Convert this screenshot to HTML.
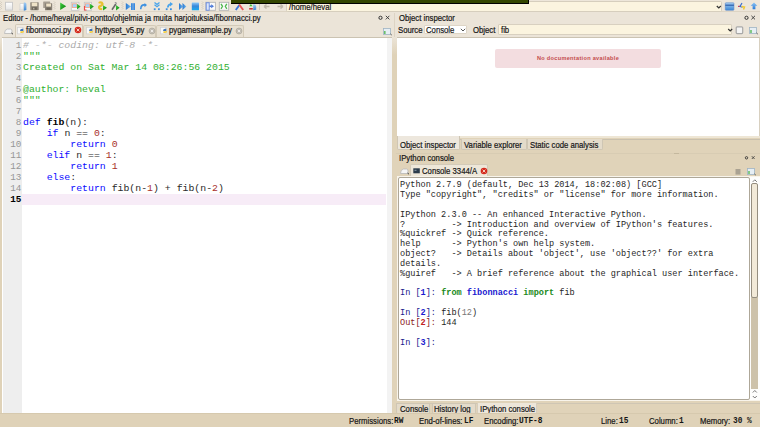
<!DOCTYPE html>
<html><head><meta charset="utf-8">
<style>
*{margin:0;padding:0;box-sizing:border-box}
html,body{width:760px;height:427px;overflow:hidden}
body{position:relative;background:#ebe4d8;font-family:"Liberation Sans",sans-serif;font-size:9px;color:#1a1a1a}
.a{position:absolute}
.t{position:absolute;white-space:pre;line-height:10px;font-size:9px;transform:scaleX(.86);transform-origin:0 0;color:#151515;-webkit-text-stroke:0.2px #151515}
.b{position:absolute;white-space:pre;line-height:10px;margin-top:0.6px;font-family:"Liberation Mono",monospace;font-weight:bold;font-size:9px;color:#151515;transform:scaleX(.87);transform-origin:0 0}
.code{position:absolute;left:23px;top:40px;font-family:"Liberation Mono",monospace;font-size:9.85px;line-height:11px;white-space:pre;color:#2a2a2a}
.gut{position:absolute;left:2px;width:19.3px;top:40px;font-family:"Liberation Mono",monospace;font-size:9.3px;line-height:11px;white-space:pre;color:#969696;text-align:right}
.kw{color:#0a0aff}
.num{color:#a8302a}
.str{color:#30b030}
.com{color:#ababab;font-style:italic}
.con{position:absolute;left:400px;top:181.2px;font-family:"Liberation Mono",monospace;font-size:8.57px;line-height:9.85px;white-space:pre;color:#262626}
.tab{position:absolute;border:1px solid #d3cab8;border-bottom:none;border-radius:2px 2px 0 0;background:#e8e0d1}
.btab{position:absolute;border:1px solid #cfc6b4;border-top:none;border-radius:0 0 2px 2px;background:#e4dbca}
</style></head><body>

<!-- toolbar -->
<div class="a" style="left:0;top:0;width:760px;height:12px;background:#ede6da"></div>
<div class="a" style="left:0;top:11px;width:760px;height:1px;background:#ddd4c4"></div>
<div class="a" style="left:286.3px;top:1px;width:435.7px;height:10.5px;background:#fbf4df;border:1px solid #d6cebd;border-radius:1.5px"></div>
<div class="t" style="left:289px;top:1.5px;color:#111">/home/heval</div>
<svg class="a" style="left:715px;top:4.5px" width="8" height="5"><path d="M1.8 1 L3.8 3 L5.8 1" fill="none" stroke="#333" stroke-width="1.2"/></svg>
<div class="a" style="left:231px;top:0;width:298px;height:3.6px;background:#344600;border-right:1px solid #000;border-bottom:1px solid #000"></div>
<svg class="a" style="left:0;top:0" width="760" height="13" viewBox="0 0 760 13">
<defs>
<linearGradient id="gb" x1="0" y1="0" x2="0" y2="1"><stop offset="0" stop-color="#8cc4f4"/><stop offset="1" stop-color="#2a7ad8"/></linearGradient>
<linearGradient id="gb2" x1="0" y1="0" x2="1" y2="0"><stop offset="0" stop-color="#2a78d0"/><stop offset="1" stop-color="#70b8f0"/></linearGradient>
<linearGradient id="gst" x1="0" y1="0" x2="0" y2="1"><stop offset="0" stop-color="#8cc8f8"/><stop offset="0.45" stop-color="#3a88d8"/><stop offset="1" stop-color="#18aaf0"/></linearGradient>
<linearGradient id="gg" x1="0" y1="0" x2="1" y2="1"><stop offset="0" stop-color="#40d040"/><stop offset="1" stop-color="#087a08"/></linearGradient>
<linearGradient id="gw" x1="0" y1="0" x2="0" y2="1"><stop offset="0" stop-color="#ffffff"/><stop offset="1" stop-color="#e4e4e4"/></linearGradient>
<linearGradient id="gof" x1="0" y1="0" x2="0" y2="1"><stop offset="0" stop-color="#a8d0f4"/><stop offset="1" stop-color="#3a86d4"/></linearGradient>
</defs>
<!-- grips (zigzag) -->
<g fill="none" stroke="#c9c1b2" stroke-width="0.8">
<path d="M0.5 1.5 l1 1 l-1 1 l1 1 l-1 1 l1 1 l-1 1 l1 1 l-1 1"/>
<path d="M54 1.5 l1 1 l-1 1 l1 1 l-1 1 l1 1 l-1 1 l1 1 l-1 1"/>
<path d="M122 1.5 l1 1 l-1 1 l1 1 l-1 1 l1 1 l-1 1 l1 1 l-1 1"/>
<path d="M202 1.5 l1 1 l-1 1 l1 1 l-1 1 l1 1 l-1 1 l1 1 l-1 1"/>
<path d="M259 4 l1 1 l-1 1 l1 1 l-1 1 l1 1 l-1 1"/>
</g>
<!-- new -->
<rect x="5.5" y="2.3" width="7" height="7.8" fill="url(#gw)" stroke="#c6c6c6" stroke-width="0.9"/>
<!-- open -->
<path d="M20 3.5 h4 v6.5 h-4.5 l0.5 -1 z" fill="url(#gw)" stroke="#d0d0d0" stroke-width="0.7"/>
<path d="M23.8 2.2 q2.6 0 2.6 1.5 v6.3 l-2.6 0.8 z" fill="url(#gof)"/>
<!-- save -->
<rect x="30.3" y="2.2" width="8.4" height="8" rx="0.6" fill="#8a8276"/>
<rect x="31.7" y="2.6" width="5.6" height="3.6" fill="#efe3c8"/>
<rect x="32.2" y="7.2" width="4.6" height="2.6" fill="#6a6458"/>
<rect x="33.2" y="7.8" width="1.2" height="1.6" fill="#c8c0b0"/>
<!-- save all -->
<rect x="43.2" y="1.5" width="7" height="6.5" rx="0.5" fill="#a59d90"/>
<rect x="45" y="3.2" width="7.2" height="7" rx="0.5" fill="#8a8276"/>
<rect x="46.2" y="3.6" width="4.8" height="3" fill="#efe3c8"/>
<rect x="46.5" y="7.6" width="4.2" height="2.2" fill="#6a6458"/>
<!-- run -->
<path d="M60.2 2.5 L66.2 6.3 L60.2 10 Z" fill="url(#gg)"/>
<!-- run config -->
<rect x="71.3" y="2.3" width="7.6" height="8" fill="#fafafa" stroke="#c4c4c4" stroke-width="0.8"/>
<rect x="72.3" y="3.8" width="4.6" height="3.6" fill="#a8d4fa" stroke="#f0a080" stroke-width="0.8"/>
<path d="M77 3.8 L80.5 6.6 L77 9.4 Z" fill="url(#gg)"/>
<!-- rerun -->
<rect x="84.3" y="2.3" width="7.3" height="8" fill="#fafafa" stroke="#c4c4c4" stroke-width="0.8"/>
<rect x="85.3" y="3.8" width="4.4" height="3.6" fill="#a8d4fa" stroke="#f0a080" stroke-width="0.8"/>
<path d="M84.5 6 v4 h2" fill="none" stroke="#f04848" stroke-width="1.1"/>
<path d="M90 3.8 L93.8 6.6 L90 9.4 Z" fill="url(#gg)"/>
<!-- python run -->
<path d="M99.5 2.5 q2.5 -0.5 3 1.2 q0.2 1.6 -1.8 2.2 q-2 0.6 -1.6 2 q0.4 1.2 2.2 1.2" fill="none" stroke="#e8c030" stroke-width="2.2" stroke-linecap="round"/>
<path d="M103 5.2 L107 7.8 L103 10.5 Z" fill="url(#gg)"/>
<!-- tool run -->
<path d="M112 9.8 L115.8 4" stroke="#6a6a6a" stroke-width="1.6"/>
<path d="M114.5 2.2 q2.5 -0.5 2.5 1.8 l-1.6 -0.6 z" fill="#909090"/>
<path d="M116 5 L119.6 7.8 L116 10.5 Z" fill="url(#gg)"/>
<!-- debug -->
<path d="M125.8 3 L131 6.5 L125.8 10 Z" fill="url(#gb2)"/>
<rect x="131" y="3.2" width="1.8" height="6.8" fill="#3a8ae0"/>
<rect x="133.2" y="3.2" width="1.8" height="6.8" fill="#3a8ae0"/>
<!-- step -->
<path d="M141 7.8 q0.2 -3 3 -3 l1.2 0" fill="none" stroke="#3d90e0" stroke-width="1.8"/>
<path d="M144.5 3 L147 5 L144.5 7.2 Z" fill="#3d90e0"/>
<rect x="140" y="7.6" width="1.6" height="1.6" fill="#3d90e0"/>
<!-- step into -->
<path d="M154.5 2.5 l2.5 2 l2.5 -2 M154.5 4.7 l2.5 2 l2.5 -2" fill="none" stroke="#48a4ec" stroke-width="1.3"/>
<rect x="153.8" y="8.3" width="1.8" height="1.8" fill="#3d90e0"/><rect x="158" y="8.3" width="1.8" height="1.8" fill="#3d90e0"/>
<!-- step return -->
<path d="M167.8 7.5 q0.3 -3 3 -3.3" fill="none" stroke="#48a4ec" stroke-width="1.8"/>
<path d="M170 2 L173 4 L170 6.4 Z" fill="#48a4ec"/>
<rect x="165.8" y="8.3" width="1.8" height="1.8" fill="#3d90e0"/><rect x="170" y="8.3" width="1.8" height="1.8" fill="#3d90e0"/>
<!-- continue -->
<path d="M179 3 L183 6.5 L179 10 Z" fill="url(#gb2)"/>
<path d="M182.5 3 L186.3 6.5 L182.5 10 Z" fill="url(#gb2)"/>
<!-- stop -->
<rect x="191.8" y="2.6" width="7.2" height="7.6" rx="0.5" fill="url(#gst)"/>
<!-- maximize -->
<rect x="205.8" y="2.3" width="9.6" height="8" fill="#fafafa" stroke="#b4b4b4" stroke-width="0.9"/>
<rect x="206.2" y="2.8" width="3" height="7.4" fill="#dde6f8" stroke="#5a80e0" stroke-width="0.8"/>
<path d="M209.5 6.3 h2" stroke="#4a78d8" stroke-width="1.6"/><path d="M211.2 4.3 l2.8 2 l-2.8 2 z" fill="#4a78d8"/>
<!-- fullscreen -->
<rect x="219.3" y="2.3" width="9.4" height="8" fill="#fafafa" stroke="#b4b4b4" stroke-width="0.9"/>
<path d="M221 3.8 l1.5 2.5 l-1.5 2.5 M226.8 3.8 l-1.5 2.5 l1.5 2.5" fill="none" stroke="#50b850" stroke-width="1.3"/>
<!-- tools -->
<path d="M235.8 10 l3.6 -5" stroke="#3a78e0" stroke-width="1.9"/>
<path d="M239.2 4.5 l4 5.5" stroke="#e85858" stroke-width="1.9"/>
<!-- pythonpath -->
<path d="M249.2 6.2 h3.4 l-1.7 -2.2 z" fill="#38c038"/>
<rect x="249.2" y="8" width="3.6" height="1.6" fill="#c83838"/>
<path d="M253.2 4.2 q3 0 3 2.5 v3 l-3 0.5 z" fill="url(#gof)"/>
<!-- back / fwd -->
<path d="M264 6.5 h5.5 M264 6.5 l2.5 -2 M264 6.5 l2.5 2" fill="none" stroke="#bfb8aa" stroke-width="1.5"/>
<path d="M283 6.5 h-5.5 M283 6.5 l-2.5 -2 M283 6.5 l-2.5 2" fill="none" stroke="#bfb8aa" stroke-width="1.5"/>
<!-- right icons -->
<rect x="725.3" y="2.8" width="8.6" height="7.4" rx="0.6" fill="url(#gof)" stroke="#5a86c8" stroke-width="0.6"/>
<rect x="725.3" y="4.6" width="8.6" height="1.2" fill="#2e5ea8"/>
<path d="M738 6.4 h3" stroke="#d84050" stroke-width="1.2"/>
<path d="M742 3 l-2 3.5 l2.5 0.8" fill="none" stroke="#3a6ed0" stroke-width="1.2"/>
<path d="M741.5 6.5 l3 0.5 l-1 2.5" fill="none" stroke="#f0c830" stroke-width="1.4"/>
<path d="M754 2.6 l3.3 3.2 h-1.9 v3.4 h-2.8 v-3.4 h-1.9 z" fill="url(#gb)"/>
</svg>


<!-- editor dock header -->
<div class="t" style="left:3px;top:13px">Editor - /home/heval/pilvi-pontto/ohjelmia ja muita harjoituksia/fibonnacci.py</div>
<svg class="a" style="left:376px;top:14px" width="16" height="8"><circle cx="4.5" cy="3.8" r="1.6" fill="none" stroke="#333" stroke-width="1"/><path d="M9.8 1.8 l3.6 3.6 M13.4 1.8 l-3.6 3.6" stroke="#333" stroke-width="0.9"/></svg>

<!-- editor tabs -->
<svg class="a" style="left:3px;top:27px" width="11" height="8"><path d="M1.5 6.5 q0 -4 3 -4.5 h3 q1.5 0 1.5 2 v2.5 z" fill="#f6f6f6" stroke="#b8b8b8" stroke-width="0.8"/><path d="M8.5 6 l1.5 1.2" stroke="#333" stroke-width="0.9"/></svg>
<div class="tab" style="left:14.6px;top:24px;width:68px;height:13px;background:#efe9df"></div>
<div class="tab" style="left:83px;top:24.5px;width:72.5px;height:12.5px"></div>
<div class="tab" style="left:155.5px;top:24.5px;width:88px;height:12.5px"></div>
<div class="t" style="left:25.8px;top:25.4px">fibonnacci.py</div>
<div class="t" style="left:94.7px;top:25.4px">hyttyset_v5.py</div>
<div class="t" style="left:169px;top:25.4px">pygamesample.py</div>
<svg class="a" style="left:16.5px;top:27px" width="9" height="8"><rect x="0.5" y="0.3" width="5.5" height="6.6" fill="#f8f8f8" stroke="#cfcfcf" stroke-width="0.7"/><path d="M3 4 q0 -2.2 2.3 -2.2 h1 v2.2 h-2.5 z" fill="#3f74b8"/><path d="M7.2 3.5 q0 2.6 -2.3 2.6 h-1.5 v-1.8 h2.6 z" fill="#f4cc3a"/></svg><svg class="a" style="left:73.6px;top:26px" width="8" height="8"><circle cx="4" cy="4" r="3.3" fill="#d42a1e"/><path d="M2.6 2.6 l2.8 2.8 M5.4 2.6 l-2.8 2.8" stroke="#fbe0d0" stroke-width="0.9"/></svg><svg class="a" style="left:85.5px;top:27px" width="9" height="8"><rect x="0.5" y="0.3" width="5.5" height="6.6" fill="#f8f8f8" stroke="#cfcfcf" stroke-width="0.7"/><path d="M3 4 q0 -2.2 2.3 -2.2 h1 v2.2 h-2.5 z" fill="#3f74b8"/><path d="M7.2 3.5 q0 2.6 -2.3 2.6 h-1.5 v-1.8 h2.6 z" fill="#f4cc3a"/></svg><svg class="a" style="left:147.5px;top:26.5px" width="8" height="8"><circle cx="4" cy="4" r="3" fill="#c2bdb4" stroke="#aaa499" stroke-width="0.6"/><path d="M2.8 2.8 l2.4 2.4 M5.2 2.8 l-2.4 2.4" stroke="#f4f2ee" stroke-width="0.9"/></svg><svg class="a" style="left:160px;top:27px" width="9" height="8"><rect x="0.5" y="0.3" width="5.5" height="6.6" fill="#f8f8f8" stroke="#cfcfcf" stroke-width="0.7"/><path d="M3 4 q0 -2.2 2.3 -2.2 h1 v2.2 h-2.5 z" fill="#3f74b8"/><path d="M7.2 3.5 q0 2.6 -2.3 2.6 h-1.5 v-1.8 h2.6 z" fill="#f4cc3a"/></svg><svg class="a" style="left:234.5px;top:26.5px" width="8" height="8"><circle cx="4" cy="4" r="3" fill="#c2bdb4" stroke="#aaa499" stroke-width="0.6"/><path d="M2.8 2.8 l2.4 2.4 M5.2 2.8 l-2.4 2.4" stroke="#f4f2ee" stroke-width="0.9"/></svg>
<svg class="a" style="left:383px;top:28px" width="10" height="8"><rect x="0.5" y="0.5" width="7" height="6" fill="#e6eef4" stroke="#9fb4c4" stroke-width="0.8"/><rect x="1" y="3" width="1.6" height="3" fill="#6ac06a"/><path d="M7.5 6 l1.2 1" stroke="#333" stroke-width="0.9"/></svg>

<!-- editor body -->
<div class="a" style="left:0;top:37px;width:394px;height:377px;background:linear-gradient(#ebe4d8,#dfd2b8 18px)"></div>
<div class="a" style="left:2px;top:36.5px;width:389.8px;height:377px;background:#fff;border-top:1px solid #cbc3b2"></div>
<div class="a" style="left:3px;top:37.5px;width:18.6px;height:375.5px;background:#eeeeee"></div>
<div class="a" style="left:386.8px;top:37.5px;width:5px;height:375.5px;background:#f3f3f3"></div>
<div class="a" style="left:22px;top:194px;width:364px;height:11px;background:#f7ecf7"></div>
<div class="gut">1
2
3
4
5
6
7
8
9
10
11
12
13
14
<b style="color:#000">15</b></div>
<div class="code"><span class="com"># -*- coding: utf-8 -*-</span>
<span class="str">"""</span>
<span class="str">Created on Sat Mar 14 08:26:56 2015</span>

<span class="str">@author: heval</span>
<span class="str">"""</span>

<span class="kw">def</span> <b style="color:#000">fib</b>(n):
    <span class="kw">if</span> n == <span class="num">0</span>:
        <span class="kw">return</span> <span class="num">0</span>
    <span class="kw">elif</span> n == <span class="num">1</span>:
        <span class="kw">return</span> <span class="num">1</span>
    <span class="kw">else</span>:
        <span class="kw">return</span> fib(n-<span class="num">1</span>) + fib(n-<span class="num">2</span>)
</div>

<!-- splitter between -->
<div class="a" style="left:394.3px;top:13px;width:0.8px;height:24px;background:#ddd4c4"></div>

<!-- right: object inspector -->
<div class="t" style="left:398.9px;top:13px">Object inspector</div>
<svg class="a" style="left:742px;top:14px" width="16" height="8"><circle cx="4.5" cy="3.8" r="1.6" fill="none" stroke="#333" stroke-width="1"/><path d="M9.4 1.8 l3.6 3.6 M13 1.8 l-3.6 3.6" stroke="#333" stroke-width="0.9"/></svg>
<div class="t" style="left:397.7px;top:24.5px">Source</div>
<div class="a" style="left:424px;top:24.8px;width:42.5px;height:9.6px;background:#fff;border:1px solid #ddd5c6;border-radius:1px"></div>
<div class="t" style="left:425.5px;top:24.5px">Console</div>
<svg class="a" style="left:459.5px;top:28px" width="6" height="4"><path d="M0.8 0.8 L3 3 L5.2 0.8" fill="none" stroke="#444" stroke-width="0.9"/></svg>
<div class="t" style="left:473.2px;top:24.5px">Object</div>
<div class="a" style="left:498px;top:24px;width:234px;height:10.5px;background:#fbf4df;border:1px solid #d8d0c0;border-radius:1px"></div>
<div class="t" style="left:501.4px;top:24.5px">fib</div>
<svg class="a" style="left:726.5px;top:28px" width="7" height="5"><path d="M1.2 1 L3.2 3 L5.2 1" fill="none" stroke="#333" stroke-width="1.2"/></svg>
<svg class="a" style="left:735px;top:26px" width="10" height="9"><rect x="1.2" y="0.8" width="6.5" height="6.8" rx="1" fill="#f4f4f4" stroke="#a8a8a8" stroke-width="1.2"/></svg>
<svg class="a" style="left:749px;top:26.5px" width="10" height="8"><rect x="0.5" y="0.5" width="7" height="6" fill="#e6eef4" stroke="#9fb4c4" stroke-width="0.8"/><rect x="1.2" y="3" width="1.6" height="3" fill="#6ac06a"/><path d="M7.5 6 l1.2 1" stroke="#333" stroke-width="0.9"/></svg>
<div class="a" style="left:396.8px;top:36.5px;width:363px;height:99.5px;background:#fff;border-top:1px solid #cbc3b2;border-right:1px solid #d8d0c0"></div>
<div class="a" style="left:495px;top:49px;width:166.3px;height:18.8px;background:#f3dde0;border-radius:2px"></div>
<div class="a" style="left:495px;width:166px;text-align:center;top:54.2px;font-size:5.6px;letter-spacing:0.3px;line-height:9px;font-weight:bold;color:#c44c4c;white-space:pre">No documentation available</div>

<!-- tan lower right -->
<div class="a" style="left:392.5px;top:136px;width:367.5px;height:278px;background:#e0d3b9"></div>
<div class="a" style="left:392.5px;top:37px;width:4.3px;height:100px;background:linear-gradient(#ebe4d8,#dfd2b8 18px)"></div>
<div class="a" style="left:396.8px;top:136px;width:363px;height:2px;background:#eee6d5"></div>
<div class="a" style="left:396.8px;top:138.5px;width:363px;height:1px;background:#c9c0ae"></div>
<div class="btab" style="left:396.8px;top:136px;width:63px;height:14.2px;background:#ede7dd"></div>
<div class="btab" style="left:461px;top:139px;width:65.5px;height:11px"></div>
<div class="btab" style="left:527px;top:139px;width:75.5px;height:11px"></div>
<div class="t" style="left:399.5px;top:139.5px">Object inspector</div>
<div class="t" style="left:463.5px;top:139.5px">Variable explorer</div>
<div class="t" style="left:529.5px;top:139.5px">Static code analysis</div>
<div class="a" style="left:396px;top:152.9px;width:364px;height:0.7px;background:#d8ccb3"></div><div class="a" style="left:674px;top:152.5px;width:5px;height:0.8px;background:#c4b89e"></div>

<div class="t" style="left:399px;top:153.2px">IPython console</div>
<svg class="a" style="left:742px;top:154px" width="16" height="8"><circle cx="4.5" cy="3.8" r="1.2" fill="none" stroke="#333" stroke-width="0.9"/><path d="M9.8 2.2 l2.8 2.8 M12.6 2.2 l-2.8 2.8" stroke="#333" stroke-width="0.8"/></svg>
<svg class="a" style="left:399px;top:167px" width="11" height="8"><path d="M1.5 6.5 q0 -4 3 -4.5 h3 q1.5 0 1.5 2 v2.5 z" fill="#f6f6f6" stroke="#b8b8b8" stroke-width="0.8"/><path d="M8.5 6 l1.5 1.2" stroke="#333" stroke-width="0.9"/></svg>
<div class="tab" style="left:410.3px;top:164.3px;width:78px;height:12px;background:#eee7d9"></div>
<svg class="a" style="left:412.5px;top:167.5px" width="8" height="6"><rect x="0.3" y="0.3" width="6.5" height="5" fill="#2b3b4b"/><rect x="1.5" y="1.8" width="2" height="0.9" fill="#9ab"/></svg>
<div class="t" style="left:421.8px;top:165.7px">Console 3344/A</div>
<svg class="a" style="left:480px;top:166.5px" width="8" height="8"><circle cx="4" cy="4" r="3.3" fill="#d42a1e"/><path d="M2.6 2.6 l2.8 2.8 M5.4 2.6 l-2.8 2.8" stroke="#fbe0d0" stroke-width="0.9"/></svg>
<svg class="a" style="left:734px;top:168px" width="8" height="8"><rect x="1.5" y="1" width="5" height="5.6" fill="#aaa292"/></svg>
<svg class="a" style="left:747px;top:167.5px" width="10" height="8"><rect x="0.5" y="0.5" width="7" height="6" fill="#e6eef4" stroke="#9fb4c4" stroke-width="0.8"/><rect x="1.2" y="3" width="1.6" height="3" fill="#6ac06a"/><path d="M7.5 6 l1.2 1" stroke="#333" stroke-width="0.9"/></svg>

<!-- console -->
<div class="a" style="left:397px;top:176.3px;width:363px;height:224.5px;background:#f8f4eb"></div>
<div class="a" style="left:750px;top:177.3px;width:9.5px;height:222.5px;background:#fdfdfc"></div>
<div class="a" style="left:397.8px;top:177.2px;width:352.4px;height:222.5px;background:#fff;border:1px solid #aea798;border-radius:2px"></div>
<div class="a" style="left:751.2px;top:297px;width:7px;height:91.5px;background:#cdc2aa"></div>
<div class="a" style="left:751.2px;top:183px;width:7px;height:114.5px;background:#f1e9d8;border:1px solid #948d7f;border-radius:2px"></div>
<svg class="a" style="left:751px;top:177.5px" width="8" height="222"><path d="M1.8 3.8 L3.8 1.8 L5.8 3.8" fill="none" stroke="#555" stroke-width="0.8"/><path d="M1.8 214.5 L3.8 212.5 L5.8 214.5" fill="none" stroke="#555" stroke-width="0.8"/><path d="M1.8 218 L3.8 220 L5.8 218" fill="none" stroke="#555" stroke-width="0.8"/></svg>
<div class="con">Python 2.7.9 (default, Dec 13 2014, 18:02:08) [GCC]
Type "copyright", "credits" or "license" for more information.

IPython 2.3.0 -- An enhanced Interactive Python.
?         -> Introduction and overview of IPython's features.
%quickref -> Quick reference.
help      -> Python's own help system.
object?   -> Details about 'object', use 'object??' for extra
details.
%guiref   -> A brief reference about the graphical user interface.

<span style="color:#1a1a8c">In [<b style="color:#1a1ad0">1</b>]: </span><b style="color:#1a8a1a">from</b> <b style="color:#1a1ad0">fibonnacci</b> <b style="color:#1a8a1a">import</b> fib

<span style="color:#1a1a8c">In [<b style="color:#1a1ad0">2</b>]: </span>fib(<span style="color:#777">12</span>)
<span style="color:#8b1a1a">Out[<b style="color:#c02020">2</b>]: </span>144

<span style="color:#1a1a8c">In [<b style="color:#1a1ad0">3</b>]: </span></div>

<!-- bottom tabs -->
<div class="a" style="left:396px;top:403px;width:364px;height:0.8px;background:#cfc6b4"></div>
<div class="btab" style="left:396.3px;top:403.5px;width:34.2px;height:10.5px"></div>
<div class="btab" style="left:431.5px;top:403.5px;width:44px;height:10.5px"></div>
<div class="btab" style="left:476.5px;top:402.5px;width:60px;height:11.8px;background:#ede6d9;border-color:#d6cdbd"></div>
<div class="t" style="left:399.6px;top:403.8px">Console</div>
<div class="t" style="left:434px;top:403.8px">History log</div>
<div class="t" style="left:479.5px;top:403.8px">IPython console</div>

<!-- status bar -->
<div class="a" style="left:0;top:413.5px;width:760px;height:14px;background:#dfd2b8"></div>
<div class="a" style="left:0;top:413.2px;width:760px;height:0.8px;background:#d6c9ae"></div>
<div class="t" style="left:348.7px;top:415.8px">Permissions:</div>
<div class="b" style="left:394.3px;top:415.8px">RW</div>
<div class="t" style="left:419px;top:415.8px">End-of-lines:</div>
<div class="b" style="left:464px;top:415.8px">LF</div>
<div class="t" style="left:483.7px;top:415.8px">Encoding:</div>
<div class="b" style="left:519px;top:415.8px">UTF-8</div>
<div class="t" style="left:600.7px;top:415.8px">Line:</div>
<div class="b" style="left:619px;top:415.8px">15</div>
<div class="t" style="left:648.6px;top:415.8px">Column:</div>
<div class="b" style="left:679px;top:415.8px">1</div>
<div class="t" style="left:700px;top:415.8px">Memory:</div>
<div class="b" style="left:733px;top:415.8px">30 %</div>

</body></html>
